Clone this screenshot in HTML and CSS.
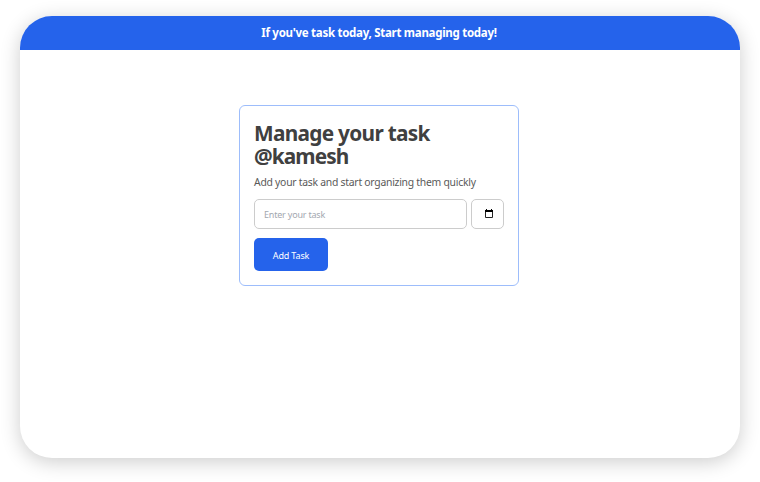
FILE: index.html
```
<!DOCTYPE html>
<html lang="en">
<head>
<meta charset="utf-8">
<title>Task manager</title>
<link rel="stylesheet" href="styles.css">
</head>
<body>
<div class="window">
  <header class="banner"><span class="banner-text">If you've task today, Start managing today!</span></header>
  <main class="card">
    <h1 class="title">Manage your task<br><span class="handle">@kamesh</span></h1>
    <p class="subtitle">Add your task and start organizing them quickly</p>
    <form class="form">
      <div class="field"><span class="placeholder">Enter your task</span></div>
      <button class="date" type="button" aria-label="Pick a date">
        <svg width="8" height="9" viewBox="0 0 8 9"><path d="M.5 2.5h7v6h-7z" fill="none" stroke="#222"/><path d="M0 1h8v2H0zM1 0h1v1H1zM6 0h1v1H6z"/></svg>
      </button>
      <button class="add" type="button">Add Task</button>
    </form>
  </main>
</div>
</body>
</html>
```
FILE: styles.css
```
* { box-sizing: border-box; }
body {
  margin: 0;
  padding: 16px 20px 24px;
  height: 482px;
  overflow: hidden;
  background: #fff;
  font-family: "Noto Sans", "Open Sans", sans-serif;
}
.window {
  height: 442px;
  border-radius: 32px;
  overflow: hidden;
  background: #fff;
  box-shadow: 0 4px 20px rgba(0, 0, 0, .2);
}
.banner {
  height: 34px;
  display: flex;
  justify-content: center;
  align-items: center;
  background: #2563eb;
  color: #fff;
  font-size: 11.5px;
  letter-spacing: -.28px;
  font-weight: 700;
  white-space: nowrap;
  padding: 0 2px 1px 0;
}
.card {
  width: 280px;
  height: 181px;
  margin: 55px 0 0 219px;
  padding: 15px 14px;
  border: 1px solid #9dbdfb;
  border-radius: 6px;
}
.title {
  margin: 0;
  padding-top: 1px;
  color: #404040;
  font-size: 20.8px;
  line-height: 23px;
  letter-spacing: -.7px;
  font-weight: 700;
  white-space: nowrap;
}
.handle { letter-spacing: -.9px; }
.subtitle {
  margin: 6px 0 9px;
  color: #595959;
  font-size: 10.4px;
  line-height: 16px;
  letter-spacing: -.26px;
  white-space: nowrap;
}
.form {
  display: grid;
  grid-template-columns: 213px 33px;
  column-gap: 4px;
  row-gap: 9px;
}
.field, .date {
  height: 30px;
  border: 1px solid #ccc;
  border-radius: 5px;
  background: #fff;
  display: flex;
  align-items: center;
}
.field {
  padding-left: 9px;
  color: #a3a7af;
  font-size: 9px;
  letter-spacing: -.2px;
}
.date { justify-content: center; padding: 0 0 1px 2px; }
.add {
  width: 74px;
  height: 33px;
  padding: 1px 0 0;
  border: 0;
  border-radius: 5px;
  background: #2563eb;
  color: #fff;
  font: 9px "Noto Sans", sans-serif;
  letter-spacing: -.15px;
}
```
